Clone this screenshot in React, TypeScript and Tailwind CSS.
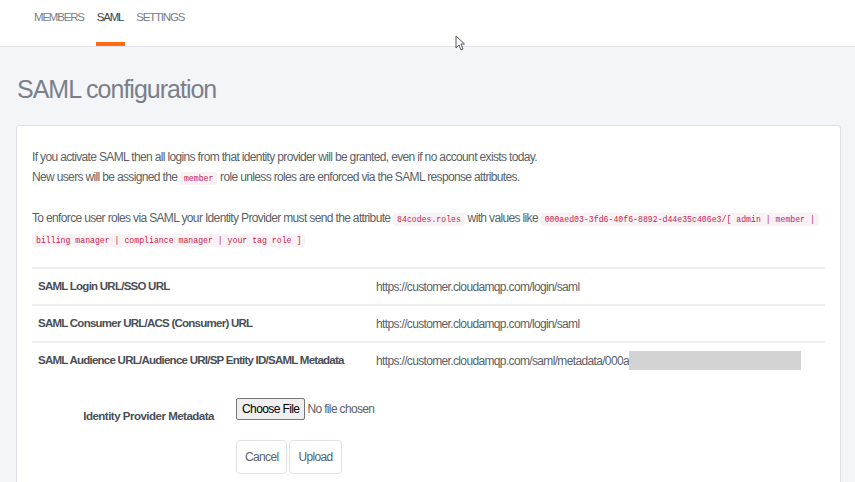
const Code = ({ children }: { children: React.ReactNode }) => (
  <code className="whitespace-nowrap rounded-[3px] bg-[#f9f2f4] px-[4px] py-[2px] font-['Liberation_Mono',monospace] text-[8.2px] leading-none tracking-normal text-[#c7254e]">
    {children}
  </code>
);

const rows = [
  { label: "SAML Login URL/SSO URL", value: "https://customer.cloudamqp.com/login/saml" },
  { label: "SAML Consumer URL/ACS (Consumer) URL", value: "https://customer.cloudamqp.com/login/saml" },
  {
    label: "SAML Audience URL/Audience URI/SP Entity ID/SAML Metadata",
    value: "https://customer.cloudamqp.com/saml/metadata/000a",
    redacted: true,
  },
];

function Cursor() {
  return (
    <svg className="absolute left-[455px] top-[35px]" width="10" height="16" viewBox="0 0 10 16">
      <path d="M1 1 L1 13 L4 10 L6 15 L8 14 L6 9 L9.5 9 Z" fill="#fff" stroke="#555" strokeWidth="1" strokeLinejoin="round" />
    </svg>
  );
}

export default function App() {
  return (
    <div className="relative h-[482px] w-[855px] overflow-hidden bg-[#f4f5f9] font-['Liberation_Sans',sans-serif]">
      {/* Tabs */}
      <div className="flex h-[47px] items-start gap-[13px] border-b border-[#e3e5ec] bg-white pl-[34px] text-[11.5px] tracking-[-1.2px]">
        <div className="pt-[9px] text-[#7a8088]">MEMBERS</div>
        <div className="relative h-[46px] pt-[9px] text-[#3c434b]">
          SAML
          <div className="absolute bottom-0 left-[-1px] right-[-2px] h-[4px] bg-[#ff6b0f]" />
        </div>
        <div className="pt-[9px] text-[#7a8088]">SETTINGS</div>
      </div>
      <Cursor />

      <h1 className="px-[17px] pt-[26px] text-[25px] leading-[32px] tracking-[-1px] text-[#7b8088]">SAML configuration</h1>

      <div className="ml-[16px] mr-[14px] mt-[20px] rounded-[3px] border border-[#dcdfe6] bg-white px-[15px] pt-[21px] pb-[20px] text-[12px] tracking-[-0.65px]">
        <p className="leading-[20px] text-[#5b5f66]">
          If you activate SAML then all logins from that identity provider will be granted, even if no account exists today.
          <br />
          New users will be assigned the <Code>member</Code> role unless roles are enforced via the SAML response attributes.
        </p>
        <p className="mt-[21px] leading-[21px] text-[#5b5f66]">
          To enforce user roles via SAML your Identity Provider must send the attribute <Code>84codes.roles</Code> with values like{" "}
          <Code>000aed03-3fd6-40f6-8892-d44e35c406e3/[ admin | member |</Code>
          <br />
          <Code>billing manager | compliance manager | your tag role ]</Code>
        </p>

        <div className="mt-[17px]">
          {rows.map((r) => (
            <div key={r.label} className="grid h-[37px] grid-cols-[338px_1fr] items-center border-t-2 border-[#eceef2] px-[6px]">
              <div className="whitespace-nowrap text-[11.5px] font-bold tracking-[-0.75px] text-[#4a4f56]">{r.label}</div>
              <div className="flex items-center whitespace-nowrap text-[#5b5f66]">
                {r.value}
                {r.redacted && <div className="h-[19px] w-[172px] bg-[#d3d3d3]" />}
              </div>
            </div>
          ))}
        </div>

        <div className="mt-[20px] flex items-start">
          <div className="w-[182px] whitespace-nowrap pt-[10px] text-right text-[11.5px] font-bold tracking-[-0.5px] text-[#4a4f56]">
            Identity Provider Metadata
          </div>
          <div className="ml-[22px] flex flex-col">
            <div className="flex items-center">
              <span className="rounded-[2px] border border-[#767676] bg-[#efefef] px-[5px] py-[2px] text-[12px] leading-[16px] tracking-[-0.6px] text-black">
                Choose File
              </span>
              <span className="ml-[2px] text-[#5b5f66]">No file chosen</span>
            </div>
            <div className="mt-[20px] flex gap-[2px]">
              <button className="h-[34px] rounded-[4px] border border-[#dfe2e8] bg-white px-[8px] text-[#5b5f66]">Cancel</button>
              <button className="h-[34px] rounded-[4px] border border-[#dfe2e8] bg-white px-[8px] text-[#5b5f66]">Upload</button>
            </div>
          </div>
        </div>
      </div>
    </div>
  );
}
